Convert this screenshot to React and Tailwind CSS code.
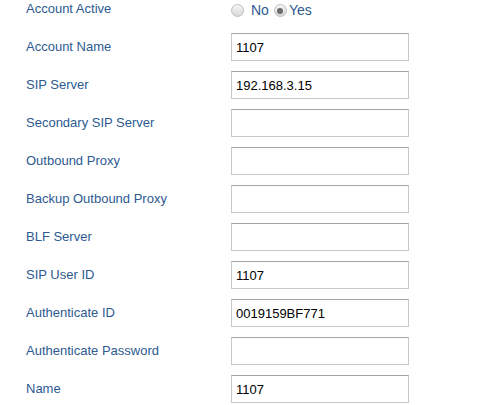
import React from 'react';

const fields = [
  { label: 'Account Name', value: '1107' },
  { label: 'SIP Server', value: '192.168.3.15' },
  { label: 'Secondary SIP Server', value: '' },
  { label: 'Outbound Proxy', value: '' },
  { label: 'Backup Outbound Proxy', value: '' },
  { label: 'BLF Server', value: '' },
  { label: 'SIP User ID', value: '1107' },
  { label: 'Authenticate ID', value: '0019159BF771' },
  { label: 'Authenticate Password', value: '' },
  { label: 'Name', value: '1107' },
];

function Radio({ checked }) {
  return (
    <span className="w-[13px] h-[13px] rounded-full border border-[#bdbdbd] bg-gradient-to-b from-[#f6f6f6] to-[#d8d8d8] flex items-center justify-center shrink-0">
      {checked && <span className="w-[6px] h-[6px] rounded-full bg-[#6a6a6a]" />}
    </span>
  );
}

export default function App() {
  return (
    <div className="w-[479px] h-[405px] overflow-hidden bg-white pl-[26px] text-[13px] text-[#2d5a91] font-['Liberation_Sans',Arial,sans-serif]">
      {/* Account Active */}
      <div className="flex items-center h-[28px] pb-[10px]">
        <span className="w-[205px] shrink-0">Account Active</span>
        <div className="flex items-center mt-[3px] text-[14px]">
          <Radio />
          <span className="ml-[7px]">No</span>
          <span className="ml-[5px]"><Radio checked /></span>
          <span className="ml-[2px]">Yes</span>
        </div>
      </div>

      {fields.map((f) => (
        <div key={f.label} className="flex items-center h-[38px]">
          <span className="w-[205px] shrink-0">{f.label}</span>
          <input
            readOnly
            value={f.value}
            className="w-[178px] h-[28px] border border-[#c8c8c8] border-t-[#a4a4a4] px-[4px] text-[13px] text-black outline-none font-['Liberation_Sans',Arial,sans-serif]"
          />
        </div>
      ))}
    </div>
  );
}
